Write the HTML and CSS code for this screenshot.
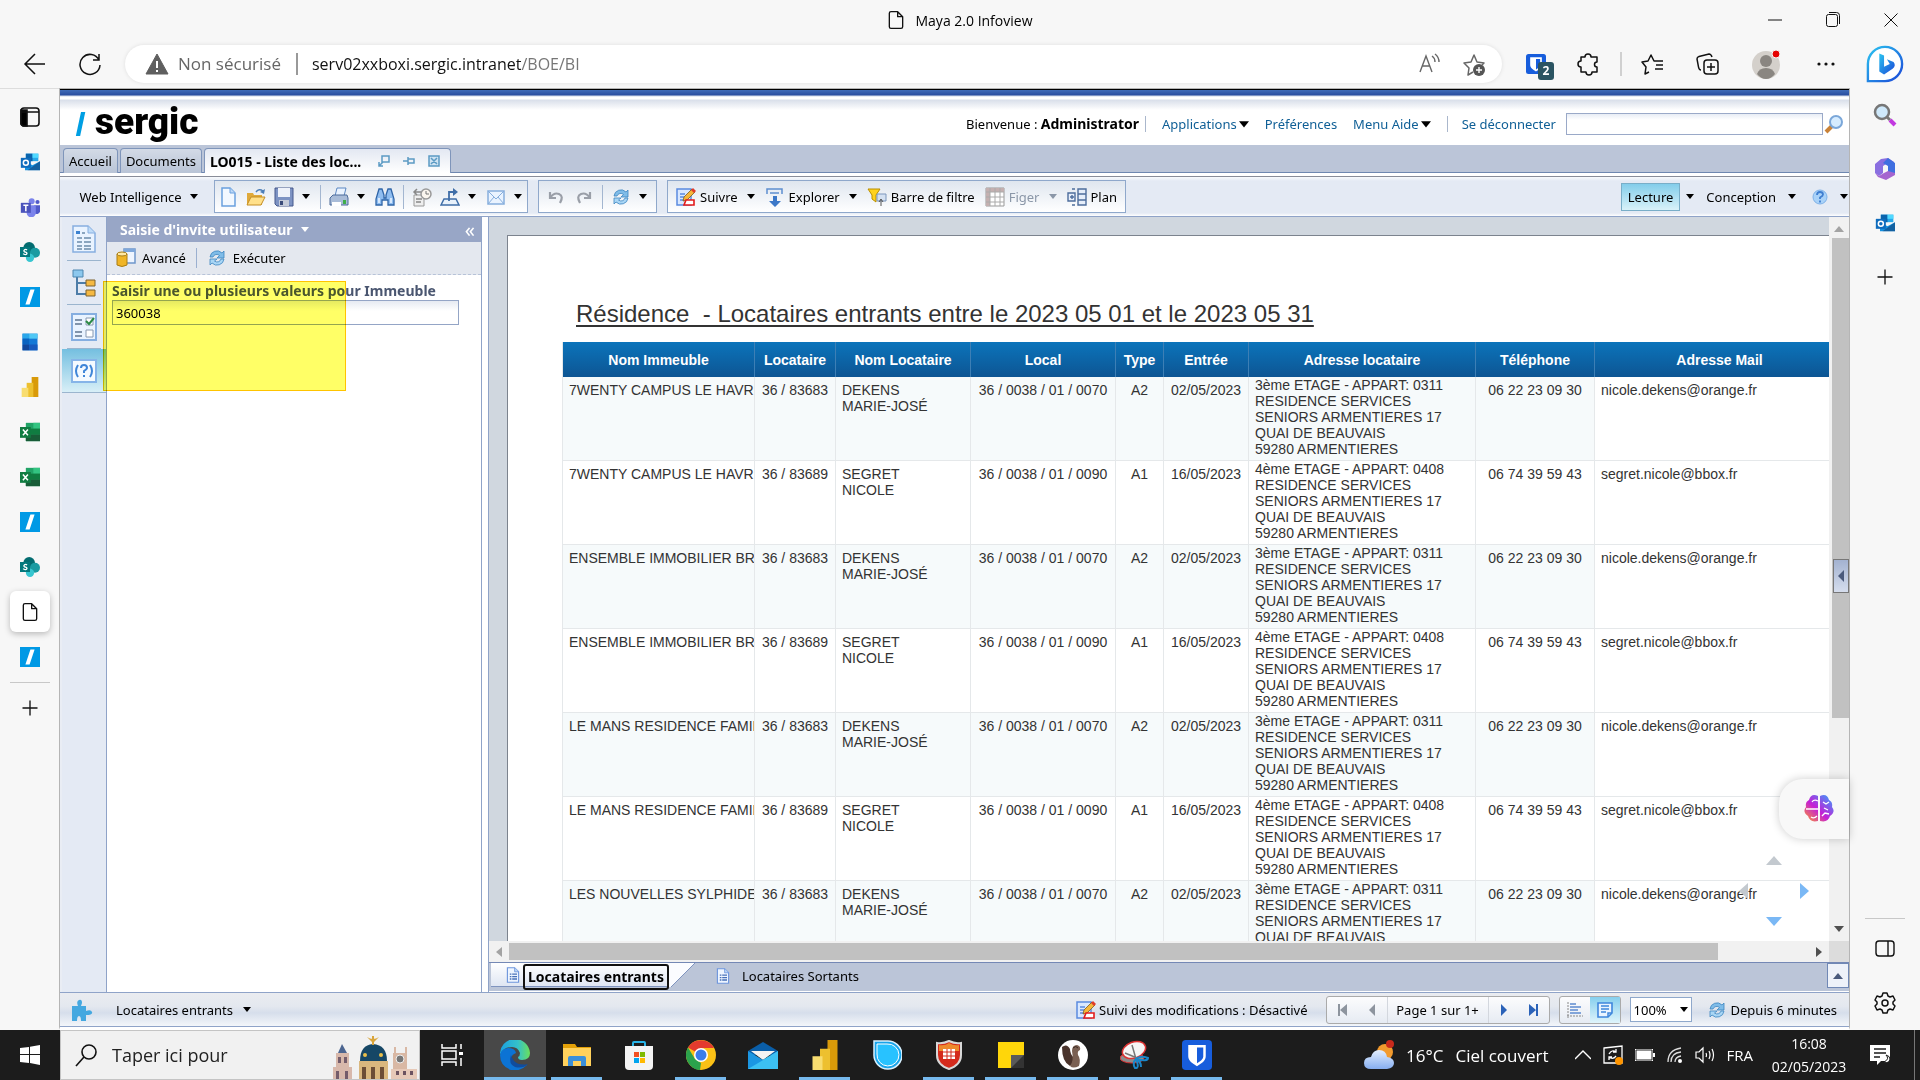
FILE: index.html
```
<!DOCTYPE html>
<html lang="fr">
<head>
  <meta charset="UTF-8" />
  <meta name="viewport" content="width=device-width, initial-scale=1.0" />
  <title>Maya 2.0 Infoview</title>
  <link rel="stylesheet" href="styles.css">
</head>
<body>
  <!-- shared icons -->
  <svg class="defs" aria-hidden="true">
    <linearGradient id="gEdge" x1="0" y1="0" x2="1" y2="0"><stop offset="0" stop-color="#1aa0e0"/><stop offset=".6" stop-color="#35c1c9"/><stop offset="1" stop-color="#6be05a"/></linearGradient>
    <linearGradient id="gBing" x1="0" y1="0" x2="1" y2="1"><stop offset="0" stop-color="#2bc4f0"/><stop offset="1" stop-color="#1b48d8"/></linearGradient>
    <linearGradient id="gM365" x1="0" y1="0" x2="1" y2="1"><stop offset="0" stop-color="#8a5fd8"/><stop offset=".5" stop-color="#3f6fe0"/><stop offset="1" stop-color="#b05fc0"/></linearGradient>
    <linearGradient id="gBrain" x1="0" y1="1" x2="1" y2="0"><stop offset="0" stop-color="#ff9a2e"/><stop offset=".45" stop-color="#c41fd6"/><stop offset="1" stop-color="#2fa8ff"/></linearGradient>
    <linearGradient id="gCloud" x1="0" y1="0" x2="0" y2="1"><stop offset="0" stop-color="#e4efff"/><stop offset="1" stop-color="#86aef0"/></linearGradient>
    <symbol id="page" viewBox="0 0 24 24"><path d="M6 2h8l6 6v12a2 2 0 0 1-2 2H6a2 2 0 0 1-2-2V4a2 2 0 0 1 2-2zM14 2v6h6" fill="none" stroke="#111" stroke-width="1.6" stroke-linejoin="round"/></symbol>
    <symbol id="plus" viewBox="0 0 24 24"><path d="M12 3v18M3 12h18" stroke="#111" stroke-width="1.6"/></symbol>
    <symbol id="outlook" viewBox="0 0 24 24"><path d="M7 2h15v9H7z" fill="#28a8ea"/><path d="M7 2h8v9H7z" fill="#0a64ad"/><path d="M15 2h7v5h-7z" fill="#50d9ff"/><path d="M6 11l9 5 9-5v11H6z" fill="#1490df"/><path d="M24 11v11H9z" fill="#123b6d" opacity=".55"/><path d="M1 7h12v12H1z" fill="#0f6cbd"/><circle cx="7" cy="13" r="3" fill="none" stroke="#fff" stroke-width="1.8"/></symbol>
    <symbol id="teams" viewBox="0 0 24 24"><circle cx="14" cy="5" r="3.6" fill="#7b83eb"/><circle cx="21" cy="6" r="2.5" fill="#5059c9"/><path d="M17 10h7v7a4 4 0 0 1-7 2z" fill="#5059c9"/><path d="M8 10h11v9a5.500 5.500 0 0 1-11 0z" fill="#7b83eb"/><path d="M1 7h12v12H1z" fill="#4b53bc"/><path d="M4 10h6M7 10v7" stroke="#fff" stroke-width="1.8"/></symbol>
    <symbol id="sharepoint" viewBox="0 0 24 24"><circle cx="11" cy="7" r="7" fill="#036c70"/><circle cx="18" cy="13" r="6" fill="#1a9ba1"/><circle cx="12" cy="19" r="5" fill="#37c6d0"/><path d="M0 6h12v12H0z" fill="#03787c"/><path d="M8.500 9.500C6 8 4 10 5 11.500c1 1 3 .6 3.300 2C8.500 15.500 5 15.500 3.800 14" fill="none" stroke="#fff" stroke-width="1.6"/></symbol>
    <symbol id="slash" viewBox="0 0 24 24"><path d="M0 0h24v24H0z" fill="#0099e5"/><path d="M12.500 3h5L11.500 21h-5z" fill="#fff"/></symbol>
    <symbol id="tiles" viewBox="0 0 24 24"><path d="M3 2h18v20H3z" fill="#1579d6"/><path d="M3 2h8v6H3z" fill="#2aa7ea"/><path d="M11 2h10v6H11z" fill="#50c8f5"/><path d="M3 8h8v7H3z" fill="#0a63c0"/><path d="M3 15h8v7H3z" fill="#12479b"/><path d="M11 15h10v7H11z" fill="#185abd"/></symbol>
    <symbol id="powerbi" viewBox="0 0 24 24"><path d="M14 0h8v24h-8z" fill="#d99a09"/><path d="M8 7h8v17H8z" fill="#edc02f"/><path d="M2 13h8v11H2z" fill="#f8dd70"/></symbol>
    <symbol id="excel" viewBox="0 0 24 24"><path d="M7 1h17v22H7z" fill="#21a366"/><path d="M16 1h8v7h-8z" fill="#33c481"/><path d="M7 8h17v7H7z" fill="#107c41"/><path d="M7 15h17v8H7z" fill="#185c37"/><path d="M0 6h13v13H0z" fill="#107c41"/><path d="M3.500 9l6 7M9.500 9l-6 7" stroke="#fff" stroke-width="1.8"/></symbol>
    <symbol id="arrow" viewBox="0 0 8 6"><path d="M0 0h8L4 5z" fill="currentColor"/></symbol>
    <symbol id="refresh" viewBox="0 0 20 20"><path d="M3 9a7 7 0 0 1 12-4l2-2v7h-7l2.500-2.500A4 4 0 0 0 6 9z" fill="#7fbce8" stroke="#3d85c0" stroke-width=".8"/><path d="M17 11a7 7 0 0 1-12 4l-2 2v-6h7l-2.500 2A4 4 0 0 0 14 11z" fill="#a9d6f5" stroke="#3d85c0" stroke-width=".8"/></symbol>
    <symbol id="doc" viewBox="0 0 20 20"><path d="M3 1h9l5 5v13H3z" fill="#eef5ff" stroke="#6d95dc" stroke-width="1.4"/><path d="M12 1v5h5" fill="#b8d2f5" stroke="#6d95dc"/><path d="M6 9h2M9 9h6M6 12h2M9 12h6M6 15h2M9 15h6" stroke="#4770b8" stroke-width="1.6"/></symbol>
    <symbol id="track" viewBox="0 0 20 20"><path d="M1 2h14v16H1z" fill="#d9e8ff" stroke="#5b8be0" stroke-width="1.5"/><path d="M4 7h5M4 10h4M4 13h4" stroke="#5b8be0" stroke-width="1.5"/><path d="M7 14l1-4 8-8 3 3-8 8z" fill="#f5b73b" stroke="#7a5a20" stroke-width=".8"/><path d="M15 3l2-2 3 3-2 2z" fill="#e03a2a"/><path d="M10 13h8v5H8z" fill="#fff" stroke="#e31b1b" stroke-width="1.6"/></symbol>
    <symbol id="shield" viewBox="0 0 24 24"><rect width="24" height="24" rx="3" fill="#175ddc"/><path d="M5 4h14v9c0 4-4 6-7 8-3-2-7-4-7-8z" fill="#fff"/><path d="M12 6h5v7c0 2.500-2.500 4-5 5.500z" fill="#175ddc"/></symbol>
  </svg>

  <header class="titlebar">
    <div class="tab-title"><svg class="i20"><use href="#page"/></svg><span>Maya 2.0 Infoview</span></div>
    <div class="window-buttons">
      <button aria-label="Réduire"><svg class="i16" viewBox="0 0 16 16"><path d="M1 8h14" stroke="#111"/></svg></button>
      <button aria-label="Agrandir"><svg class="i16" viewBox="0 0 16 16"><path d="M1.500 4.500a2 2 0 0 1 2-2h7a2 2 0 0 1 2 2v8a2 2 0 0 1-2 2h-7a2 2 0 0 1-2-2zM4 .5h7.500a3 3 0 0 1 3 3V12" fill="none" stroke="#111"/></svg></button>
      <button aria-label="Fermer"><svg class="i16" viewBox="0 0 16 16"><path d="M1.500 1.500l13 13M14.500 1.500l-13 13" stroke="#111"/></svg></button>
    </div>
  </header>

  <nav class="addressbar">
    <button class="nav-btn" aria-label="Retour"><svg class="i24" viewBox="0 0 24 24"><path d="M22 12H3M12 2L2 12l10 10" fill="none" stroke="#111" stroke-width="1.500"/></svg></button>
    <button class="nav-btn" aria-label="Actualiser"><svg class="i24" viewBox="0 0 24 24"><path d="M21 8a10 10 0 1 0 1 5M21 2v6h-6" fill="none" stroke="#111" stroke-width="1.500"/></svg></button>
    <div class="url-box">
      <svg class="i24" viewBox="0 0 24 24"><path d="M12 2l11 20H1z" fill="#5f5f5f" stroke="#5f5f5f" stroke-linejoin="round"/><path d="M12 9v7M12 18v2" stroke="#fff" stroke-width="2"/></svg>
      <span class="insecure">Non sécurisé</span>
      <span class="url"><b>serv02xxboxi.sergic.intranet</b>/BOE/BI</span>
      <button aria-label="Lecture à voix haute"><svg class="i24" viewBox="0 0 24 24"><path d="M3 20L9 4l6 16M5 14h8M15 4q3 2 3 6M18 2q4 3 4 8" fill="none" stroke="#666" stroke-width="1.4"/></svg></button>
      <button aria-label="Ajouter aux favoris"><svg class="i24" viewBox="0 0 24 24"><path d="M11 20l-5 3 1-7-5-5 7-1 3-7 3 7 7 1-2 2" fill="none" stroke="#666" stroke-width="1.500" stroke-linejoin="round"/><circle cx="17" cy="18" r="6" fill="#555"/><path d="M17 15v6M14 18h6" stroke="#fff" stroke-width="1.400"/></svg></button>
    </div>
    <div class="ext-buttons">
      <button class="badged" aria-label="Bitwarden"><svg class="i20"><use href="#shield"/></svg><span class="badge">2</span></button>
      <button aria-label="Extensions"><svg class="i24" viewBox="0 0 24 24"><path d="M8 5a3 3 0 0 1 6 0h6v5a2.500 2.500 0 0 0 0 5v5h-5a3 3 0 0 1-6 0H4v-5a3 3 0 0 1 0-6V5z" fill="none" stroke="#111" stroke-width="1.500" stroke-linejoin="round"/></svg></button>
      <span class="ext-sep"></span>
      <button aria-label="Favoris"><svg class="i24" viewBox="0 0 24 24"><path d="M8 20l-4 2 1-7-4-5 6-1 3-6 3 6h9M15 13h7M14 17h8" fill="none" stroke="#111" stroke-width="1.500" stroke-linejoin="round"/></svg></button>
      <button aria-label="Collections"><svg class="i24" viewBox="0 0 24 24"><rect x="8" y="8" width="14" height="14" rx="3" fill="none" stroke="#111" stroke-width="1.500"/><path d="M15 11v8M11 15h8M5 18q-2 0-2.500-3L1 7q0-2 2-2.500L13 2q2 0 3 3" fill="none" stroke="#111" stroke-width="1.500"/></svg></button>
      <button aria-label="Profil"><svg class="i32" viewBox="0 0 32 32"><circle cx="15" cy="17" r="14" fill="#d4d0cb"/><circle cx="15" cy="13" r="6" fill="#8a8681"/><path d="M6 26q2-6 9-6t9 6q-4 5-9 5t-9-5z" fill="#8a8681"/><circle cx="25" cy="6" r="4" fill="#e50000" stroke="#f7f7f7"/></svg></button>
      <button aria-label="Paramètres et plus"><svg class="i24" viewBox="0 0 24 24"><g fill="#111"><circle cx="5" cy="12" r="1.600"/><circle cx="12" cy="12" r="1.600"/><circle cx="19" cy="12" r="1.600"/></g></svg></button>
    </div>
    <button class="bing" aria-label="Bing"><svg viewBox="0 0 40 40"><path d="M2 38V20A18 18 0 1 1 20 38z" fill="#fff" stroke="url(#gBing)" stroke-width="2.500"/><path d="M14 9l5 2v12l6-3-3-5 7 3q3 4-1 7l-9 6-5-3z" fill="url(#gBing)"/></svg></button>
  </nav>

  <div class="middle">
    <aside class="side left-side">
      <button aria-label="Onglets"><svg class="i24" viewBox="0 0 24 24"><rect x="3" y="3" width="18" height="18" rx="3" fill="none" stroke="#111" stroke-width="1.600"/><path d="M3 5h6v16H5l-2-2zM3 7h18" stroke="#111" stroke-width="1.600"/></svg></button>
      <button aria-label="Outlook"><svg class="i20"><use href="#outlook"/></svg></button>
      <button aria-label="Teams"><svg class="i20"><use href="#teams"/></svg></button>
      <button aria-label="SharePoint"><svg class="i20"><use href="#sharepoint"/></svg></button>
      <button aria-label="Sergic"><svg class="i20"><use href="#slash"/></svg></button>
      <button aria-label="Dynamics"><svg class="i20"><use href="#tiles"/></svg></button>
      <button aria-label="Power BI"><svg class="i20"><use href="#powerbi"/></svg></button>
      <button aria-label="Excel"><svg class="i20"><use href="#excel"/></svg></button>
      <button aria-label="Excel 2"><svg class="i20"><use href="#excel"/></svg></button>
      <button aria-label="Sergic 2"><svg class="i20"><use href="#slash"/></svg></button>
      <button aria-label="SharePoint 2"><svg class="i20"><use href="#sharepoint"/></svg></button>
      <button aria-label="Infoview" class="current"><svg class="i20"><use href="#page"/></svg></button>
      <button aria-label="Sergic 3"><svg class="i20"><use href="#slash"/></svg></button>
      <hr>
      <button aria-label="Nouvel onglet"><svg class="i20"><use href="#plus"/></svg></button>
    </aside>

    <main class="app">
      <header class="app-header">
        <div class="logo"><svg viewBox="0 0 12 28"><path d="M6 0h5L5 28H0z" fill="#009fe3"/></svg><span>sergic</span></div>
        <div class="user-menu">
          <span class="welcome">Bienvenue : <b>Administrator</b></span>
          <a href="#" class="menu-link">Applications<svg><use href="#arrow"/></svg></a>
          <a href="#">Préférences</a>
          <a href="#" class="menu-link">Menu Aide<svg><use href="#arrow"/></svg></a>
          <a href="#" class="logout">Se déconnecter</a>
          <input type="text" aria-label="Rechercher">
          <button aria-label="Lancer la recherche"><svg class="i20" viewBox="0 0 20 20"><path d="M8 12l-6 6" stroke="#c98238" stroke-width="4"/><circle cx="12" cy="8" r="6" fill="#d6ecff" stroke="#7ba7d9" stroke-width="2"/></svg></button>
        </div>
      </header>

      <nav class="doc-tabs">
        <button>Accueil</button>
        <button>Documents</button>
        <div class="doc-tab">
          <b>LO015 - Liste des loc...</b>
          <svg class="i12" viewBox="0 0 12 12"><path d="M4 1h7v6H4zM1 11l4-4M1 7v4h4" fill="none" stroke="#5c9bc4" stroke-width="1.500"/></svg>
          <svg class="i12" viewBox="0 0 12 12"><path d="M0 6h5M5 2v8M5 4h6v4H5" fill="none" stroke="#5c9bc4" stroke-width="1.500"/></svg>
          <svg class="i12" viewBox="0 0 12 12"><path d="M1 1h10v10H1zM3 3l6 6M9 3l-6 6" fill="#cfe3f2" stroke="#5c9bc4" stroke-width="1.500"/></svg>
        </div>
      </nav>

      <div class="toolbar">
        <button class="wi">Web Intelligence <svg class="dd"><use href="#arrow"/></svg></button>
        <div class="group">
          <button aria-label="Nouveau"><svg class="i20" viewBox="0 0 20 20"><path d="M4 1h8l5 5v13H4z" fill="#f2f8ff" stroke="#6aa0de" stroke-width="1.500"/><path d="M12 1v5h5" fill="#bcd8f7" stroke="#6aa0de"/></svg></button>
          <button aria-label="Ouvrir"><svg class="i20" viewBox="0 0 20 20"><path d="M1 6h6l1 2h8v10H1z" fill="#dfa93a"/><path d="M1 18l4-8h14l-4 8z" fill="#ffe08a" stroke="#c48e25"/><path d="M10 5q3-4 7-1" fill="none" stroke="#4d7fb8" stroke-width="1.500"/><path d="M19 2l-1 5-4-2z" fill="#4d7fb8"/></svg></button>
          <button aria-label="Enregistrer"><svg class="i20" viewBox="0 0 20 20"><path d="M1 1h18v18H3l-2-2z" fill="#7d93c3" stroke="#46598c"/><path d="M4 1h12v9H4z" fill="#eef2fa"/><path d="M5 13h10v6H5z" fill="#c5cbd9"/><path d="M6 14h3v4H6z" fill="#3a4b79"/></svg></button>
          <button class="dd-btn" aria-label="Options d'enregistrement"><svg class="dd"><use href="#arrow"/></svg></button>
          <span class="sep"></span>
          <button aria-label="Imprimer"><svg class="i20" viewBox="0 0 20 20"><path d="M6 9l2-8h9l-2 8z" fill="#eaf3ff" stroke="#5b87c2"/><path d="M1 11l3-3h14l1 3v7H1z" fill="#a9bcd8" stroke="#4c6a99"/><path d="M3 15h9v4H3z" fill="#fff"/><path d="M14 13h3v4h-3z" fill="#3fae49"/></svg></button>
          <button class="dd-btn" aria-label="Options d'impression"><svg class="dd"><use href="#arrow"/></svg></button>
          <button aria-label="Chercher"><svg class="i20" viewBox="0 0 20 20"><path d="M4 2h3l2 6v3h2V8l2-6h3l3 10v6h-6v-5H7v5H1v-6z" fill="#8fbdf0" stroke="#2f65a8" stroke-width="1.300"/><path d="M4 11v5M16 11v5" stroke="#e8f3ff" stroke-width="1.600"/></svg></button>
          <span class="sep"></span>
          <button aria-label="Historique"><svg class="i20" viewBox="0 0 20 20"><path d="M2 8h10v11H2z" fill="#eee" stroke="#999"/><path d="M4 12h6M4 15h5M2 5h7M5 2L2 5l3 3" fill="none" stroke="#888" stroke-width="1.500"/><circle cx="14" cy="7" r="5" fill="#fbf6ef" stroke="#999" stroke-width="1.500"/><path d="M14 4v3h3" fill="none" stroke="#777"/></svg></button>
          <button aria-label="Exporter"><svg class="i20" viewBox="0 0 20 20"><path d="M1 18l3-6h12l3 6z" fill="#e8f1fb" stroke="#3f6ea8" stroke-width="1.500"/><path d="M9 14V5h5" fill="none" stroke="#3f6ea8" stroke-width="1.800"/><path d="M13 1l5 4-5 4z" fill="#3f6ea8"/></svg></button>
          <button class="dd-btn" aria-label="Options d'export"><svg class="dd"><use href="#arrow"/></svg></button>
          <button aria-label="Envoyer"><svg class="i20" viewBox="0 0 20 20"><path d="M2 4h16v13H2z" fill="#e9f3ff" stroke="#86aedd" stroke-width="1.500"/><path d="M2 4l8 8 8-8M2 17l6-7M18 17l-6-7" fill="none" stroke="#86aedd"/></svg></button>
          <button class="dd-btn" aria-label="Options d'envoi"><svg class="dd"><use href="#arrow"/></svg></button>
        </div>
        <div class="group history">
          <button aria-label="Annuler"><svg class="i20" viewBox="0 0 20 20"><path d="M4 5v6h6M4 11q4-6 9-4t1 9" fill="none" stroke="#9a9fa8" stroke-width="2.200"/></svg></button>
          <button aria-label="Rétablir"><svg class="i20" viewBox="0 0 20 20"><path d="M16 5v6h-6M16 11q-4-6-9-4t-1 9" fill="none" stroke="#9a9fa8" stroke-width="2.200"/></svg></button>
          <span class="sep"></span>
          <button aria-label="Actualiser les données"><svg class="i20"><use href="#refresh"/></svg></button>
          <button class="dd-btn" aria-label="Options d'actualisation"><svg class="dd"><use href="#arrow"/></svg></button>
        </div>
        <div class="group labelled">
          <button><svg class="i20"><use href="#track"/></svg>Suivre<svg class="dd"><use href="#arrow"/></svg></button>
          <button><svg class="i20" viewBox="0 0 20 20"><path d="M2 7V2h15v5M5 6h9" fill="none" stroke="#5e8fd0" stroke-width="1.500"/><path d="M8 9h4v5h4l-6 6-6-6h4z" fill="#3c78c8"/></svg>Explorer<svg class="dd"><use href="#arrow"/></svg></button>
          <button><svg class="i20" viewBox="0 0 20 20"><path d="M1 2h12L9 8v7l-4-3V8z" fill="#ffd21f" stroke="#b98e00"/><path d="M10 7h9v7h-9z" fill="#d4e1f2" stroke="#7c97bd"/><path d="M14 19v-6M12 15l2-3 2 3" fill="none" stroke="#555"/></svg>Barre de filtre</button>
          <button disabled><svg class="i20" viewBox="0 0 20 20"><path d="M1 1h18v18H1z" fill="#fff" stroke="#999"/><path d="M1 1h18v4H5v14H1z" fill="#c4b0b0"/><path d="M5 1v18M10 1v18M15 1v18M1 5h18M1 10h18M1 15h18" stroke="#aaa"/></svg>Figer<svg class="dd"><use href="#arrow"/></svg></button>
          <button><svg class="i20" viewBox="0 0 20 20"><path d="M1 6h7v8H1zM11 2h8v16h-8zM11 7h8M11 13h8M5 2h3M5 18h3M5 8v4M3 10h4" fill="#e6eefa" stroke="#4d6d9c" stroke-width="1.400"/></svg>Plan</button>
        </div>
        <div class="mode">
          <button class="active">Lecture</button><svg class="dd"><use href="#arrow"/></svg>
          <button>Conception</button><svg class="dd"><use href="#arrow"/></svg>
          <button aria-label="Aide" class="help"><svg class="i16" viewBox="0 0 16 16"><circle cx="8" cy="8" r="7" fill="#a9d2f8" stroke="#7fb2e8"/><path d="M5 6q0-3 3-3t3 2.500q0 1.500-3 3V10M8 11.500v2" fill="none" stroke="#3f7ed0" stroke-width="1.800"/></svg></button><svg class="dd"><use href="#arrow"/></svg>
        </div>
      </div>

      <div class="workspace">
        <div class="rail">
          <button aria-label="Récapitulatif"><svg viewBox="0 0 26 30"><path d="M2 2h15l7 7v19H2z" fill="#e9f3ff" stroke="#86aee0" stroke-width="1.500"/><path d="M17 2v7h7" fill="#bfdcf8" stroke="#86aee0"/><path d="M5 7h4v3H5z" fill="#3c82d0"/><path d="M11 9h3M6 14h5M13 14h7M6 18h5M13 18h7M6 22h5M13 22h7M6 25h5M13 25h7" stroke="#6b8cab" stroke-width="1.300"/></svg></button>
          <button aria-label="Plan de navigation"><svg viewBox="0 0 26 30"><path d="M6 8v18h9M6 15h9" fill="none" stroke="#4d7da8" stroke-width="2"/><path d="M2 2h10v7H2z" fill="#8cc8ee" stroke="#4d86b0"/><path d="M15 12h9v6h-9zM15 22h9v6h-9z" fill="#f5b942" stroke="#7c6230"/></svg></button>
          <button aria-label="Contrôles d'entrée"><svg viewBox="0 0 26 30"><path d="M1 2h24v26H1z" fill="#e9f3ff" stroke="#86aee0" stroke-width="2"/><path d="M4 8h7M4 12h7M4 20h7M4 24h7" stroke="#5f7690" stroke-width="1.500"/><path d="M15 6h7v7h-7zM15 18h7v7h-7z" fill="#fff" stroke="#8798b0"/><path d="M15 9l3 3 5-6" fill="none" stroke="#2b8a46" stroke-width="2"/></svg></button>
          <button aria-label="Saisie d'invite" class="active"><svg viewBox="0 0 26 30"><path d="M1 4h24v22H1z" fill="#f4faff" stroke="#86b4e8" stroke-width="2"/><path d="M7 9q-4 6 0 12M19 9q4 6 0 12M10 12q0-3 3-3t3 3q0 1-3 3v2M13 19v2" fill="none" stroke="#3f86d8" stroke-width="2"/></svg></button>
        </div>
        <section class="panel">
          <h2>Saisie d'invite utilisateur <svg class="dd"><use href="#arrow"/></svg><button aria-label="Replier">«</button></h2>
          <div class="panel-tools">
            <button><svg class="i20" viewBox="0 0 20 20"><path d="M8 1h11v14H8z" fill="#eef5ff" stroke="#6f97cc" stroke-width="1.500"/><path d="M8 1h11v3H8z" fill="#7ea8dc"/><path d="M1 6v11q5 3 10 0V6z" fill="#f0b526" stroke="#a97d14"/><ellipse cx="6" cy="6" rx="5" ry="2" fill="#ffe9a6" stroke="#a97d14"/></svg>Avancé</button>
            <button class="run"><svg class="i20"><use href="#refresh"/></svg>Exécuter</button>
          </div>
          <div class="prompt">
            <label for="immeuble">Saisir une ou plusieurs valeurs pour Immeuble</label>
            <input id="immeuble" type="text" value="360038">
          </div>
        </section>
        <div class="highlight"></div>

        <section class="report">
          <div class="viewport">
            <div class="canvas">
              <div class="sheet">
                <h1>Résidence&nbsp; - Locataires entrants entre le 2023 05 01 et le 2023 05 31</h1>
                <table>
                  <colgroup><col class="c-imm"><col class="c-loc"><col class="c-nom"><col class="c-local"><col class="c-type"><col class="c-date"><col class="c-adr"><col class="c-tel"><col class="c-mail"></colgroup>
                  <thead>
                    <tr><th>Nom Immeuble</th><th>Locataire</th><th>Nom Locataire</th><th>Local</th><th>Type</th><th>Entrée</th><th>Adresse locataire</th><th>Téléphone</th><th>Adresse Mail</th></tr>
                  </thead>
                  <tbody>
                    <tr><td>7WENTY CAMPUS LE HAVRE</td><td>36 / 83683</td><td>DEKENS<br>MARIE-JOSÉ</td><td>36 / 0038 / 01 / 0070</td><td>A2</td><td>02/05/2023</td><td>3ème ETAGE - APPART: 0311<br>RESIDENCE SERVICES<br>SENIORS ARMENTIERES 17<br>QUAI DE BEAUVAIS<br>59280 ARMENTIERES</td><td>06 22 23 09 30</td><td>nicole.dekens@orange.fr</td></tr>
                    <tr><td>7WENTY CAMPUS LE HAVRE</td><td>36 / 83689</td><td>SEGRET<br>NICOLE</td><td>36 / 0038 / 01 / 0090</td><td>A1</td><td>16/05/2023</td><td>4ème ETAGE - APPART: 0408<br>RESIDENCE SERVICES<br>SENIORS ARMENTIERES 17<br>QUAI DE BEAUVAIS<br>59280 ARMENTIERES</td><td>06 74 39 59 43</td><td>segret.nicole@bbox.fr</td></tr>
                    <tr><td>ENSEMBLE IMMOBILIER BRI</td><td>36 / 83683</td><td>DEKENS<br>MARIE-JOSÉ</td><td>36 / 0038 / 01 / 0070</td><td>A2</td><td>02/05/2023</td><td>3ème ETAGE - APPART: 0311<br>RESIDENCE SERVICES<br>SENIORS ARMENTIERES 17<br>QUAI DE BEAUVAIS<br>59280 ARMENTIERES</td><td>06 22 23 09 30</td><td>nicole.dekens@orange.fr</td></tr>
                    <tr><td>ENSEMBLE IMMOBILIER BRI</td><td>36 / 83689</td><td>SEGRET<br>NICOLE</td><td>36 / 0038 / 01 / 0090</td><td>A1</td><td>16/05/2023</td><td>4ème ETAGE - APPART: 0408<br>RESIDENCE SERVICES<br>SENIORS ARMENTIERES 17<br>QUAI DE BEAUVAIS<br>59280 ARMENTIERES</td><td>06 74 39 59 43</td><td>segret.nicole@bbox.fr</td></tr>
                    <tr><td>LE MANS RESIDENCE FAMIL</td><td>36 / 83683</td><td>DEKENS<br>MARIE-JOSÉ</td><td>36 / 0038 / 01 / 0070</td><td>A2</td><td>02/05/2023</td><td>3ème ETAGE - APPART: 0311<br>RESIDENCE SERVICES<br>SENIORS ARMENTIERES 17<br>QUAI DE BEAUVAIS<br>59280 ARMENTIERES</td><td>06 22 23 09 30</td><td>nicole.dekens@orange.fr</td></tr>
                    <tr><td>LE MANS RESIDENCE FAMIL</td><td>36 / 83689</td><td>SEGRET<br>NICOLE</td><td>36 / 0038 / 01 / 0090</td><td>A1</td><td>16/05/2023</td><td>4ème ETAGE - APPART: 0408<br>RESIDENCE SERVICES<br>SENIORS ARMENTIERES 17<br>QUAI DE BEAUVAIS<br>59280 ARMENTIERES</td><td>06 74 39 59 43</td><td>segret.nicole@bbox.fr</td></tr>
                    <tr><td>LES NOUVELLES SYLPHIDE</td><td>36 / 83683</td><td>DEKENS<br>MARIE-JOSÉ</td><td>36 / 0038 / 01 / 0070</td><td>A2</td><td>02/05/2023</td><td>3ème ETAGE - APPART: 0311<br>RESIDENCE SERVICES<br>SENIORS ARMENTIERES 17<br>QUAI DE BEAUVAIS<br>59280 ARMENTIERES</td><td>06 22 23 09 30</td><td>nicole.dekens@orange.fr</td></tr>
                  </tbody>
                </table>
              </div>
            </div>
            <div class="vscroll">
              <svg class="up" viewBox="0 0 10 6"><path d="M0 6h10L5 0z"/></svg>
              <div class="thumb"></div>
              <svg viewBox="0 0 10 6"><path d="M0 0h10L5 6z"/></svg>
            </div>
            <svg class="pan" viewBox="0 0 76 76"><path d="M30 12h16l-8-9zM12 30v16l-9-8z" fill="#c3c9cf"/><path d="M64 30v16l9-8z" fill="#7ab8f5"/><path d="M30 64h16l-8 9z" fill="#7ab8f5"/></svg>
            <button class="brain" aria-label="Assistant"><svg viewBox="0 0 30 30"><path d="M14 2q-7-3-9 4-4 2-3 7-4 5 2 9 2 7 10 5zM16 2q7-3 9 4 4 2 3 7 4 5-2 9-2 7-10 5z" fill="url(#gBrain)"/><path d="M8 8q2-3 6-1M2 15h12M7 23q3 2 6-1M19 8l3 2 3-2M20 14l4 2M18 22l3-3 4 1" fill="none" stroke="#fff" stroke-width="1.300"/></svg></button>
            <button class="expand" aria-label="Déplier"><svg viewBox="0 0 6 12"><path d="M6 0v12L0 6z" fill="#4a5a7c"/></svg></button>
          </div>
          <div class="hscroll">
            <svg class="off" viewBox="0 0 6 10"><path d="M6 0v10L0 5z"/></svg>
            <div class="track"><div class="thumb"></div></div>
            <svg viewBox="0 0 6 10"><path d="M0 0v10l6-5z"/></svg>
            <span class="corner"></span>
          </div>
          <div class="sheet-tabs">
            <div class="sheet-tab"><svg class="i16"><use href="#doc"/></svg><button>Locataires entrants</button></div>
            <svg class="slant" viewBox="0 0 26 24"><path d="M0 0h26L2 24H0z" fill="#fbfcff"/><path d="M26 0L2 24" stroke="#7f94bf"/></svg>
            <button class="other"><svg class="i16"><use href="#doc"/></svg>Locataires Sortants</button>
            <button class="tabs-up" aria-label="Liste des rapports"><svg viewBox="0 0 10 6"><path d="M0 6h10L5 0z" fill="#4a5a7c"/></svg></button>
          </div>
        </section>
      </div>

      <footer class="status">
        <svg class="i24" viewBox="0 0 24 24"><path d="M2 8h6q-2-5 1-6t3 3l-1 3h5v5q5-2 6 1t-6 3v6h-5q0-5-2-5t-2 5H2z" fill="#45a8e0"/></svg>
        <button class="report-name">Locataires entrants<svg class="dd"><use href="#arrow"/></svg></button>
        <button class="tracking"><svg class="i20"><use href="#track"/></svg>Suivi des modifications : Désactivé</button>
        <div class="pager">
          <button disabled aria-label="Première page"><svg class="i12" viewBox="0 0 12 12"><path d="M2 0h2v12H2zM11 0v12L4 6z"/></svg></button>
          <button disabled aria-label="Page précédente"><svg class="i12" viewBox="0 0 12 12"><path d="M9 0v12L3 6z"/></svg></button>
          <span>Page 1 sur 1+</span>
          <button aria-label="Page suivante"><svg class="i12" viewBox="0 0 12 12"><path d="M3 0v12l6-6z"/></svg></button>
          <button aria-label="Dernière page"><svg class="i12" viewBox="0 0 12 12"><path d="M8 0h2v12H8zM1 0v12l7-6z"/></svg></button>
        </div>
        <div class="views">
          <button aria-label="Mode rapide"><svg class="i16" viewBox="0 0 16 16"><path d="M3 2h6M3 5h11M3 8h8M3 11h11" stroke="#5e8bd0" stroke-width="1.600"/><path d="M1 0v16M0 14h16" stroke="#888" stroke-dasharray="2 1"/></svg></button>
          <button class="active" aria-label="Mode page"><svg class="i16" viewBox="0 0 16 16"><path d="M1 1h14v10l-4 4H1z" fill="#eaf4ff" stroke="#3f86dc" stroke-width="1.600"/><path d="M4 4h8M4 7h8M4 10h5M11 15v-4h4" fill="none" stroke="#3f86dc" stroke-width="1.500"/></svg></button>
        </div>
        <label class="zoom"><select aria-label="Zoom"><option>100%</option></select><svg class="dd"><use href="#arrow"/></svg></label>
        <button class="since"><svg class="i20"><use href="#refresh"/></svg>Depuis 6 minutes</button>
      </footer>
    </main>

    <aside class="side right-side">
      <button aria-label="Rechercher"><svg class="i24" viewBox="0 0 24 24"><path d="M14 14l3 3" stroke="#777" stroke-width="3"/><path d="M17 17l5 5" stroke="#c239e0" stroke-width="4"/><circle cx="9" cy="9" r="7" fill="#cfe9fb" stroke="#777" stroke-width="2.500"/></svg></button>
      <button aria-label="Microsoft 365"><svg class="i24" viewBox="0 0 24 24"><path d="M8 2l7-1 6 4v4l-6-3-5 3v7l-4 3-4-3V7z" fill="#8a6fe0"/><path d="M15 1l7 5v10l-7 4V9l-5-3z" fill="#3f6fe0"/><path d="M2 16l4 3 5-3 4-2 7 2v2l-9 5-8-3z" fill="#a565cf"/></svg></button>
      <button aria-label="Outlook"><svg class="i20"><use href="#outlook"/></svg></button>
      <button aria-label="Personnaliser"><svg class="i20"><use href="#plus"/></svg></button>
      <hr>
      <button aria-label="Barre latérale"><svg class="i20" viewBox="0 0 20 20"><rect x="1" y="2" width="18" height="15" rx="3" fill="none" stroke="#111" stroke-width="1.400"/><path d="M13 2v15" stroke="#111" stroke-width="1.400"/></svg></button>
      <button aria-label="Paramètres"><svg class="i24" viewBox="0 0 24 24"><path d="M10 2h4l1 3 2 1 3-1 2 4-2 2v2l2 2-2 4-3-1-2 1-1 3h-4l-1-3-2-1-3 1-2-4 2-2v-2L2 9l2-4 3 1 2-1z" fill="none" stroke="#111" stroke-width="1.500" stroke-linejoin="round"/><circle cx="12" cy="12" r="3" fill="none" stroke="#111" stroke-width="1.500"/></svg></button>
    </aside>
  </div>

  <footer class="taskbar">
    <button class="start" aria-label="Démarrer"><svg class="i20" viewBox="0 0 20 20"><path d="M0 3l9-1v7H0zM10 1.800L20 0v9H10zM0 10h9v8l-9-1zM10 10h10v10l-10-2z" fill="#fff"/></svg></button>
    <label class="search">
      <svg class="i24" viewBox="0 0 24 24"><circle cx="15" cy="9" r="7" fill="none" stroke="#111" stroke-width="1.600"/><path d="M10 14l-8 9" stroke="#111" stroke-width="1.600"/></svg>
      <input type="text" placeholder="Taper ici pour" aria-label="Taper ici pour rechercher">
      <svg class="city" viewBox="0 0 88 44"><path d="M5 18h13v26H5zM2 32h19v12H2z" fill="#d8b8ab"/><path d="M7 18l4-9 5 9z" fill="#4c6590"/><path d="M7 22h3v6H7zM13 22h3v6h-3zM5 36h3v8H5zM14 36h3v8h-3z" fill="#745c6b"/><path d="M29 26q0-16 13-17 14 1 14 17z" fill="#164766"/><path d="M28 26h29v18H28z" fill="#d9b77e"/><path d="M41 1h2v9h-2zM36 2q6 4 12 0l-6 6z" fill="#d9a53b"/><path d="M31 32h4v12h-4zM40 32h4v12h-4zM49 32h4v12h-4z" fill="#6b4d36"/><circle cx="34" cy="20" r="2" fill="#eabf4a"/><circle cx="50" cy="20" r="2" fill="#eabf4a"/><path d="M62 18h14v26H62zM63 12h2v6h-2zM74 12h2v6h-2z" fill="#d9b8a4"/><circle cx="69" cy="24" r="4" fill="#777" stroke="#eee"/><path d="M60 34h26v10H60z" fill="#e6c9b8"/><path d="M65 36h3v4h-3zM72 36h3v4h-3zM79 36h3v4h-3z" fill="#6b5360"/></svg>
    </label>
    <button class="taskview" aria-label="Affichage des tâches"><svg class="i24" viewBox="0 0 24 24"><path d="M2 1v4h14V1M2 23v-4h14v4M2 8h14v8H2zM21 1v5M21 15v8" fill="none" stroke="#fff" stroke-width="1.500"/><path d="M19 9h4v3h-4z" fill="#fff"/></svg></button>
    <div class="apps">
      <button class="open focus" aria-label="Edge"><svg viewBox="0 0 30 30"><path d="M0 15A15 15 0 0 1 30 13q0 7-8 7-4 0-4-3 2-1 2-4-2-6-8-6Q3 7 0 15z" fill="url(#gEdge)"/><path d="M0 15q1-6 8-7 7 0 8 5-6 2-4 8 3 6 15 4-7 7-16 5Q0 26 0 15z" fill="#0c73d4"/><path d="M11 15q-3 9 4 12 8 2 13-3-9 2-14-3-2-3-3-6z" fill="#104c9e"/></svg></button>
      <button class="open" aria-label="Explorateur"><svg viewBox="0 0 30 30"><path d="M1 4h12l2 3h14v18H1z" fill="#e3a008"/><path d="M1 8h28v18H1z" fill="#ffd15c"/><path d="M6 26v-8q0-2 2-2h14q2 0 2 2v8h-5v-5h-8v5z" fill="#3a8fd9"/></svg></button>
      <button aria-label="Microsoft Store"><svg viewBox="0 0 30 30"><path d="M9 7V3q0-1 1-1h10q1 0 1 1v4" fill="none" stroke="#28b4e8" stroke-width="2"/><path d="M1 6h28v20q0 4-4 4H5q-4 0-4-4z" fill="#f4f4f4"/><path d="M10 12h5v5h-5z" fill="#f25022"/><path d="M16 12h5v5h-5z" fill="#7fba00"/><path d="M10 18h5v5h-5z" fill="#00a4ef"/><path d="M16 18h5v5h-5z" fill="#ffb900"/></svg></button>
      <button class="open" aria-label="Chrome"><svg viewBox="0 0 30 30"><circle cx="15" cy="15" r="15" fill="#fbc116"/><path d="M15 15L2 7.500A15 15 0 0 1 28 8H15z" fill="#e33b2e"/><path d="M2 7.500L9 19l6 4-1 7A15 15 0 0 1 2 7.500z" fill="#2ba24c"/><circle cx="15" cy="15" r="7" fill="#fff"/><circle cx="15" cy="15" r="5.500" fill="#3b7de9"/></svg></button>
      <button aria-label="Courrier"><svg viewBox="0 0 30 30"><path d="M0 11l15-9 15 9v4H0z" fill="#0a5ea8"/><path d="M3 11h24l-12 9z" fill="#f3f3f3"/><path d="M0 11l15 9 15-9v18H0z" fill="#1b96e2"/><path d="M0 29l30-18v18z" fill="#3cc0f2"/></svg></button>
      <button class="open" aria-label="Power BI"><svg viewBox="0 0 24 24"><use href="#powerbi"/></svg></button>
      <button aria-label="Bleu"><svg viewBox="0 0 30 30"><path d="M2 1h13a14 14 0 1 1-13 13z" fill="#18a4ea" stroke="#d8f1ff" stroke-width="1.500"/><path d="M5 4h10a11 11 0 1 1-10 10z" fill="#28c2ff" stroke="#fff"/></svg></button>
      <button class="open" aria-label="FortiClient"><svg viewBox="0 0 30 30"><path d="M15 1q6 3 12 2v12q0 10-12 14Q3 25 3 15V3q6 1 12-2z" fill="#d42a1c" stroke="#d8d8d8" stroke-width="2"/><path d="M5 5q6 1 10-2 5 3 10 2v6H5z" fill="#ee8a2c"/><path d="M9 9h12v10H9z" fill="#fff"/><path d="M9 12h12M9 16h12M13 9v10M17 9v10" stroke="#d42a1c"/></svg></button>
      <button class="open" aria-label="Pense-bêtes"><svg viewBox="0 0 30 30"><path d="M2 2h26v14L16 28H2z" fill="#ffd60a"/><path d="M15 15h13v13H15z" fill="#333"/><path d="M15 28V15h13z" fill="#5a5a5a"/></svg></button>
      <button class="open" aria-label="DBeaver"><svg viewBox="0 0 30 30"><circle cx="15" cy="15" r="15" fill="#fff"/><path d="M4 7q5-4 8 2 0 5 4 9-1 6-4 8-8-4-8-19z" fill="#4a342c"/><path d="M14 11q0-6 5-6 4 1 3 5-3 1-2 5 3 4 1 11-6 3-9 0 4-5 2-15z" fill="#7a6052"/><path d="M15 8q3-3 5 0" stroke="#3a2821" fill="none"/></svg></button>
      <button class="open" aria-label="Outil Capture"><svg viewBox="0 0 30 30"><ellipse cx="12" cy="18" rx="12" ry="5" fill="#8c8c8c" stroke="#d33"/><ellipse cx="14" cy="10" rx="12" ry="8" fill="#f6f6f6" stroke="#d33" stroke-width="1.500" transform="rotate(-20 14 10)"/><path d="M12 5l4 14M5 13l12 5" stroke="#777" stroke-width="1.500"/><path d="M16 19q4-4 12-1 0 4-12 1zM16 19q-4 4-1 9 5 1 1-9zM16 19q5 2 5 8" fill="none" stroke="#1a86c8" stroke-width="2"/></svg></button>
      <button class="open" aria-label="Bitwarden"><svg viewBox="0 0 24 24"><use href="#shield"/></svg></button>
    </div>
    <div class="tray">
      <button class="weather"><svg viewBox="0 0 30 30"><circle cx="21" cy="12" r="8" fill="#f29a2e"/><circle cx="26" cy="4" r="4" fill="#c92a1c"/><path d="M7 29q-7 0-7-6t7-6q2-7 8-7 7 0 8 7 7 1 7 6t-7 6z" fill="url(#gCloud)"/></svg><span>16°C</span><span>Ciel couvert</span></button>
      <svg class="i16" viewBox="0 0 16 16"><path d="M0 12l8-8 8 8" fill="none" stroke="#fff" stroke-width="1.400"/></svg>
      <svg class="i20" viewBox="0 0 20 20"><path d="M1 3l18-2v17H1z" fill="none" stroke="#fff" stroke-width="1.300"/><path d="M6 9q3-5 7-2M13 4v3h-3M13 11q-3 4-7 1M6 15v-3h3" fill="none" stroke="#fff" stroke-width="1.300"/><circle cx="16" cy="16" r="4" fill="#ff9500"/></svg>
      <svg class="i20" viewBox="0 0 20 20"><path d="M0 4h18v12H0zM18 8h2v4h-2z" fill="#fff"/><path d="M1 5h16v10H1z" fill="none" stroke="#222"/></svg>
      <svg class="i16" viewBox="0 0 16 16"><path d="M1 15Q1 3 14 1M4 15q0-9 10-10M8 15q0-5 6-6" fill="none" stroke="#ddd" stroke-width="1.300"/><circle cx="13" cy="14" r="2" fill="#fff"/></svg>
      <svg class="i20" viewBox="0 0 20 20"><path d="M1 7h3l4-4v14l-4-4H1zM11 8q1 2 0 4M14 6q2 4 0 8M17 4q3 6 0 12" fill="none" stroke="#fff" stroke-width="1.200"/></svg>
      <span>FRA</span>
      <button class="clock"><span>16:08</span><span>02/05/2023</span></button>
      <button class="notif" aria-label="Notifications"><svg class="i20" viewBox="0 0 20 20"><path d="M0 0h20v16h-9l-4 4v-4H0z" fill="#fff"/><path d="M4 4h12M4 8h12M4 12h6" stroke="#1b1b1b" stroke-width="1.400"/><path d="M16 10q4 4-2 7 5 2 6-3 0-3-4-4z" fill="#fff" stroke="#1b1b1b"/></svg></button>
    </div>
  </footer>
</body>
</html>
```
FILE: styles.css
```
:root {
  --chrome: #f7f7f7;
  --ui: Tahoma, "Noto Sans", sans-serif;
  --segoe: "Segoe UI", "Open Sans", sans-serif;
  --line: #8fa3c8;
  --strip: #bbc5d8;
  --pale: #e4eaf4;
}
* {
  box-sizing: border-box;
}
body {
  margin: 0;
  height: 100vh;
  display: flex;
  flex-direction: column;
  overflow: hidden;
  background: var(--chrome);
  font-family: var(--segoe);
  color: #000;
}
button {
  display: flex;
  align-items: center;
  justify-content: center;
  padding: 0;
  border: 0;
  background: none;
  font: inherit;
  color: inherit;
  white-space: nowrap;
}
svg {
  flex: none;
}
.defs {
  position: absolute;
  width: 0;
  height: 0;
}
.i12 { width: 12px; height: 12px; }
.i16 { width: 16px; height: 16px; }
.i20 { width: 20px; height: 20px; }
.i24 { width: 24px; height: 24px; }
.i32 { width: 32px; height: 32px; }
.dd { width: 8px; height: 6px; }

/* browser chrome */
.titlebar {
  height: 40px;
  display: flex;
  align-items: center;
  padding-left: 172px;
}
.tab-title {
  flex: 1;
  display: flex;
  justify-content: center;
  align-items: center;
  gap: 10px;
  font-size: 14px;
}
.window-buttons {
  display: flex;
}
.window-buttons button {
  width: 58px;
  height: 40px;
}
.addressbar {
  height: 48px;
  display: flex;
  align-items: center;
  padding: 0 16px 0 7px;
}
.nav-btn {
  width: 55px;
  height: 48px;
}
.url-box {
  flex: 1;
  height: 38px;
  display: flex;
  align-items: center;
  gap: 9px;
  margin-left: 8px;
  padding: 0 16px 0 20px;
  border-radius: 19px;
  background: #fff;
  box-shadow: 0 0 4px rgba(0, 0, 0, 0.1);
  font-size: 16px;
}
.insecure {
  color: #666;
  padding-right: 15px;
  border-right: 2px solid #999;
  line-height: 22px;
  font-size: 17px;
}
.url {
  flex: 1;
  padding-left: 5px;
  color: #767676;
}
.url b {
  font-weight: 400;
  color: #111;
}
.url-box button {
  margin-left: 12px;
}
.ext-buttons {
  display: flex;
  align-items: center;
  gap: 31px;
  padding: 0 28px 0 24px;
}
.badged {
  position: relative;
}
.badge {
  position: absolute;
  left: 12px;
  top: 8px;
  width: 16px;
  height: 18px;
  border-radius: 3px;
  background: #2b5462;
  color: #fff;
  font-size: 12px;
  font-weight: 700;
  line-height: 18px;
}
.ext-sep {
  width: 2px;
  height: 24px;
  margin: 0 -12px;
  background: #d0d0d0;
}
.bing svg {
  width: 38px;
  height: 38px;
}
.middle {
  flex: 1;
  min-height: 0;
  display: flex;
}
.side {
  display: flex;
  flex-direction: column;
  align-items: center;
}
.side hr {
  width: 40px;
  margin: 0;
  border: 0;
  border-top: 1px solid #c8c8c8;
}
.left-side {
  width: 59px;
  padding-top: 5px;
  border-top: 1px solid #ddd;
}
.left-side button {
  width: 40px;
  height: 41px;
  margin: 2px 0;
}
.left-side .current {
  border-radius: 6px;
  background: #fff;
  box-shadow: 0 2px 6px rgba(0, 0, 0, 0.25);
}
.left-side hr {
  margin: 3px 0 2px;
}
.right-side {
  width: 70px;
}
.right-side button {
  width: 40px;
  height: 54px;
}
.right-side hr {
  margin-top: auto;
}
.right-side hr + button {
  margin-top: 3px;
}

/* application */
.app {
  flex: 1;
  min-width: 0;
  display: flex;
  flex-direction: column;
  border: 1px solid #b5b5b5;
  border-bottom: 3px solid #fff;
  background: #fff;
  font-family: var(--ui);
  font-size: 13px;
}
.app-header {
  height: 56px;
  display: flex;
  justify-content: space-between;
  align-items: center;
  padding: 12px 5px 0 15px;
  border-top: 1px solid #000;
  background: linear-gradient(#3f6cb8 0, #2a4ea0 5px, #cfd8e8 6px, #fff 7px, #fff 9px, #d9dfea 10px, #fff 20px);
}
.logo {
  display: flex;
  align-items: center;
  gap: 8px;
  font-family: Roboto, sans-serif;
  font-size: 37px;
  font-weight: 900;
  line-height: 38px;
}
.logo svg {
  width: 12px;
  height: 24px;
}
.logo span {
  margin-top: -4px;
}
.user-menu {
  display: flex;
  align-items: center;
  gap: 16px;
}
.user-menu a {
  color: #0f5f96;
  text-decoration: none;
}
.user-menu .welcome,
.logout {
  line-height: 16px;
}
.welcome b,
.doc-tab b {
  font-size: 14px;
}
.welcome {
  padding-right: 6px;
  border-right: 1px solid #aab7cc;
}
.logout {
  padding-left: 14px;
  border-left: 1px solid #aab7cc;
}
.menu-link svg {
  width: 10px;
  height: 8px;
  margin-left: 2px;
  color: #000;
}
.user-menu input {
  width: 257px;
  height: 22px;
  margin-left: -6px;
  border: 1px solid #9aa9c8;
  background: linear-gradient(#e8edf5, #fff 6px);
}
.user-menu button {
  margin-left: -15px;
}
.doc-tabs {
  height: 31px;
  display: flex;
  gap: 2px;
  padding: 3px 3px 0;
  border-bottom: 3px solid #fff;
  background: var(--strip);
  box-shadow: inset 0 -1px #6e87b0;
}
.doc-tabs button,
.doc-tab {
  display: flex;
  align-items: center;
  padding: 0 5px;
  border: 1px solid #7f95ba;
  border-bottom: 0;
  border-radius: 4px 4px 0 0;
  background: linear-gradient(#d3dae6, #b9c4d6);
}
.doc-tab {
  gap: 13px;
  padding-right: 10px;
  background: linear-gradient(#e3e8f2, #fff);
}
.doc-tab b {
  margin-right: 4px;
}
.toolbar {
  height: 41px;
  display: flex;
  align-items: center;
  padding-right: 1px;
  border-top: 1px solid #888c98;
  border-bottom: 1px solid var(--line);
  background: linear-gradient(#f8fafd, var(--pale) 4px, var(--pale) 36px, #fff);
}
.wi {
  width: 154px;
  gap: 8px;
  padding-left: 3px;
}
.group {
  height: 33px;
  display: flex;
  align-items: center;
  gap: 8px;
  padding: 0 3px;
  border: 1px solid #8fa8cb;
  background: linear-gradient(#dfe6ef, #fff);
  margin-right: 10px;
}
.group .dd-btn {
  width: 8px;
  margin: 0 2px 0 0;
}
.sep {
  width: 1px;
  height: 24px;
  background: #a3b6d0;
}
.history {
  padding: 0 7px;
}
.labelled {
  gap: 10px;
  padding: 0 8px;
}
.labelled button {
  gap: 4px;
}
.labelled .dd {
  margin-left: 5px;
}
.labelled button:disabled {
  color: #8b97a8;
}
.mode {
  display: flex;
  align-items: center;
  gap: 6px;
  margin-left: auto;
}
.mode button {
  height: 28px;
  padding: 0 6px;
}
.mode .help {
  margin-left: 4px;
}
.mode .active {
  border: 1px solid #79aec8;
  background: linear-gradient(#83cdea, #d9f2f9);
}
.workspace {
  position: relative;
  flex: 1;
  min-height: 0;
  display: flex;
  border-left: 2px solid #e9edf4;
}
.rail {
  width: 45px;
  display: flex;
  flex-direction: column;
  border-right: 1px solid var(--line);
  background: var(--pale);
}
.rail button {
  height: 44px;
  margin: 0 5px;
  border-bottom: 1px solid #9bb5ce;
}
.rail svg {
  width: 26px;
  height: 30px;
}
.rail .active {
  margin: 0;
  background: linear-gradient(#74bfe0, #d8eff7);
}
.panel {
  width: 375px;
  border-right: 1px solid var(--line);
}
.panel h2 {
  height: 25px;
  display: flex;
  align-items: center;
  gap: 8px;
  margin: 0;
  padding: 0 6px 0 13px;
  background: #98a6c6;
  color: #fff;
  font-size: 14px;
}
.panel h2 button {
  margin-left: auto;
  font-size: 20px;
  font-weight: 400;
  line-height: 20px;
}
.panel-tools {
  height: 33px;
  display: flex;
  align-items: center;
  padding-left: 9px;
  border-bottom: 1px dashed #b7c3d8;
  background: #e4e8ef;
}
.panel-tools button {
  gap: 6px;
  padding-right: 10px;
}
.panel-tools .run {
  padding-left: 10px;
  border-left: 1px solid #9bb0d0;
}
.prompt {
  display: flex;
  flex-direction: column;
  padding: 7px 22px 0 5px;
}
.prompt label {
  color: #4a5670;
  font-size: 14px;
  font-weight: 700;
  line-height: 18px;
}
.prompt input {
  height: 25px;
  padding: 0 3px;
  border: 1px solid #94a5c6;
  background: linear-gradient(#e6eaf2, #fff 10px);
  font: inherit;
}
/* marker drawn over the prompt field */
.highlight {
  position: absolute;
  left: 41px;
  top: 64px;
  width: 243px;
  height: 110px;
  border: 1px solid #ffc400;
  background: #ffff66;
  mix-blend-mode: multiply;
}

/* report */
.report {
  flex: 1;
  min-width: 0;
  display: flex;
  flex-direction: column;
  margin-left: 6px;
  border-left: 1px solid var(--line);
}
.viewport {
  position: relative;
  flex: 1;
  min-height: 0;
  display: flex;
}
.canvas {
  flex: 1;
  min-width: 0;
  overflow: hidden;
  padding: 18px 0 0 18px;
  background: #d0d7df;
}
.sheet {
  min-height: 100%;
  padding: 63px 0 0 54px;
  border: 1px solid #7c838e;
  border-width: 1px 0 0 1px;
  background: #fff;
  font-family: Arial, "Liberation Sans", sans-serif;
  color: #333;
}
.sheet h1 {
  margin: 0 0 13px 14px;
  font-size: 24px;
  font-weight: 400;
  line-height: 30px;
  text-decoration: underline;
  text-decoration-thickness: 2px;
  text-underline-offset: 3px;
  white-space: nowrap;
}
table {
  width: 1283px;
  table-layout: fixed;
  border-spacing: 0;
  border-left: 1px solid #e5e8ea;
  font-size: 14px;
  line-height: 16px;
}
.c-imm { width: 192px; }
.c-loc { width: 81px; }
.c-nom { width: 135px; }
.c-local { width: 145px; }
.c-type { width: 48px; }
.c-date { width: 85px; }
.c-adr { width: 227px; }
.c-tel { width: 119px; }
.c-mail { width: 250px; }
th {
  height: 35px;
  padding: 0;
  border-right: 1px solid #3d7fb5;
  background: linear-gradient(#0b74bb, #0d5593);
  color: #fff;
}
td {
  height: 84px;
  padding: 5px 0 0 6px;
  overflow: hidden;
  vertical-align: top;
  white-space: nowrap;
  border: 1px solid #e5e8ea;
  border-width: 0 1px 1px 0;
}
tr:nth-child(odd) td {
  background: #f6fafb;
}
tr td:nth-child(9) {
  background: #fff;
}
td:nth-child(2),
td:nth-child(4),
td:nth-child(5),
td:nth-child(6),
td:nth-child(8) {
  padding-left: 0;
  text-align: center;
}
td:nth-child(7) {
  padding-top: 0;
}
.vscroll {
  width: 20px;
  display: flex;
  flex-direction: column;
  align-items: center;
  padding: 9px 0;
  background: #f1f1f1;
}
.vscroll svg,
.hscroll svg {
  fill: #505050;
}
.vscroll svg {
  width: 10px;
  height: 6px;
}
.vscroll .up,
.hscroll .off {
  fill: #a3a3a3;
}
.vscroll .thumb {
  width: 17px;
  height: 68%;
  margin: 6px 0 auto 2px;
  background: #c1c1c1;
}
.pan {
  position: absolute;
  right: 37px;
  bottom: 12px;
  width: 76px;
  height: 76px;
}
.brain {
  position: absolute;
  right: 0;
  bottom: 102px;
  width: 70px;
  height: 60px;
  padding-left: 10px;
  border-radius: 24px 0 0 24px;
  background: #f8f8f8;
  box-shadow: 0 0 10px rgba(0, 0, 0, 0.2);
}
.brain svg {
  width: 30px;
  height: 30px;
}
.expand {
  position: absolute;
  right: 0;
  top: 342px;
  width: 16px;
  height: 34px;
  border: 1px solid #777;
  background: linear-gradient(#a3b2d0, #d5dded);
}
.expand svg {
  width: 6px;
  height: 12px;
}
.hscroll {
  height: 21px;
  display: flex;
  align-items: center;
  gap: 7px;
  padding-left: 7px;
  background: #f1f1f1;
}
.hscroll svg {
  width: 6px;
  height: 10px;
}
.hscroll .track {
  flex: 1;
}
.hscroll .thumb {
  width: 93%;
  height: 17px;
  background: #c1c1c1;
}
.hscroll .corner {
  width: 20px;
  height: 21px;
  background: #dcdcdc;
}
.sheet-tabs {
  height: 30px;
  display: flex;
  align-items: flex-start;
  padding-left: 2px;
  border-top: 1px solid #7488b5;
  border-bottom: 1px solid #fff;
  background: var(--strip);
}
.sheet-tab {
  height: 24px;
  display: flex;
  align-items: center;
  gap: 2px;
  padding-left: 14px;
  border-bottom: 1px solid #7f94bf;
  background: linear-gradient(#fff, #dfe6f3);
}
.sheet-tab button {
  height: 26px;
  margin-top: 4px;
  padding: 0 3px;
  border: 2px solid #111;
  border-radius: 3px;
  font-size: 14px;
  font-weight: 700;
}
.slant {
  width: 26px;
  height: 24px;
}
.other {
  height: 26px;
  gap: 11px;
  padding-left: 20px;
}
.tabs-up {
  width: 22px;
  height: 25px;
  margin-left: auto;
  border: 1px solid #7088b5;
  background: #eef2f9;
}
.tabs-up svg {
  width: 10px;
  height: 6px;
}
.status {
  height: 35px;
  display: flex;
  align-items: center;
  padding: 0 12px 0 10px;
  border: 1px solid var(--line);
  border-width: 1px 0;
  background: linear-gradient(#eaecf0, #e4e8ef 40%, #d6deeb 60%, #f3f6fa);
}
.report-name {
  gap: 10px;
  padding-left: 22px;
}
.tracking {
  gap: 3px;
  margin-left: auto;
  margin-right: 18px;
}
.pager,
.views {
  height: 28px;
  display: flex;
  border: 1px solid #aaa;
  border-radius: 3px;
  background: linear-gradient(#fcfcfd, #e6ebf3);
}
.pager button,
.views button {
  width: 30px;
  fill: #2b62b8;
}
.pager button:disabled {
  fill: #8d949e;
}
.pager span {
  width: 102px;
  line-height: 26px;
  text-align: center;
  border: 1px solid #d3d7de;
  border-width: 0 1px;
}
.views {
  margin: 0 9px;
}
.views .active {
  background: linear-gradient(#86cfee, #dff4fb);
}
.zoom {
  position: relative;
}
.zoom select {
  width: 62px;
  height: 25px;
  padding: 0 3px;
  appearance: none;
  border: 1px solid #8fa8cb;
  border-radius: 0;
  background: #fff;
  font: inherit;
}
.zoom .dd {
  position: absolute;
  right: 4px;
  top: 10px;
}
.since {
  gap: 4px;
  margin-left: 15px;
}

/* taskbar */
.taskbar {
  height: 50px;
  display: flex;
  background: #1c1c1c;
  color: #fff;
}
.start {
  width: 60px;
}
.search {
  width: 360px;
  display: flex;
  align-items: center;
  gap: 12px;
  padding-left: 13px;
  border: 1px solid #c4c4c4;
  background: #f1f1f1;
}
.search input {
  flex: 1;
  min-width: 0;
  border: 0;
  background: none;
  font: inherit;
  font-size: 18px;
}
.search input::placeholder {
  color: #222;
}
.city {
  width: 88px;
  height: 44px;
  align-self: flex-end;
}
.taskview {
  width: 64px;
}
.apps {
  display: flex;
}
.apps button {
  width: 62px;
  position: relative;
}
.apps svg {
  width: 30px;
  height: 30px;
}
.apps .open::after {
  content: "";
  position: absolute;
  left: 5px;
  right: 6px;
  bottom: 0;
  height: 3px;
  background: #76b9ed;
}
.apps .focus {
  background: #484848;
}
.apps .focus::after {
  left: 0;
  right: 0;
}
.tray {
  display: flex;
  align-items: center;
  gap: 12px;
  margin-left: auto;
  padding-right: 5px;
  font-size: 15px;
}
.weather {
  gap: 12px;
  margin-right: 14px;
  font-size: 17px;
}
.weather svg {
  width: 30px;
  height: 30px;
}
.clock {
  width: 88px;
  margin-right: -20px;
  flex-direction: column;
  line-height: 23px;
  font-size: 14px;
}
.notif {
  width: 70px;
  height: 50px;
  border-right: 1px solid #777;
}
```
